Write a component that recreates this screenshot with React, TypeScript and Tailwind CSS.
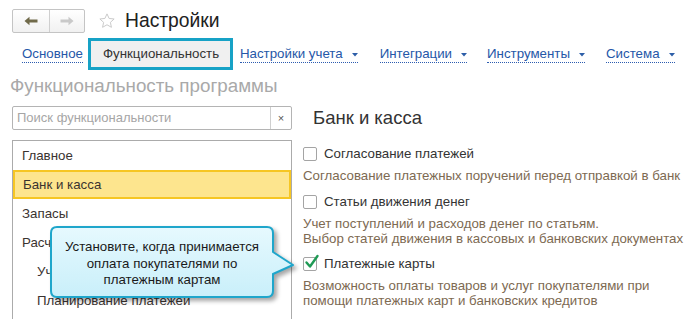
import React from "react";

function Caret() {
  return (
    <svg width="6" height="4" viewBox="0 0 6 4" className="ml-[9px] mt-[2px]">
      <path d="M0 0 L6 0 L3 3.5 Z" fill="#2d5ea8" />
    </svg>
  );
}

function Tab({ label, caret }: { label: string; caret?: boolean }) {
  return (
    <div className="flex items-center border-b border-dotted border-[#2c5cb0] leading-[16px] text-[13.3px] text-[#2557a8]">
      <span>{label}</span>
      {caret && <Caret />}
    </div>
  );
}

function Checkbox({ checked }: { checked?: boolean }) {
  return (
    <div className="relative w-[14px] h-[14px] border border-[#a4a4a4] rounded-[2px] bg-white shrink-0">
      {checked && (
        <svg width="16" height="16" viewBox="0 0 16 16" className="absolute left-[0px] top-[-4px]">
          <path d="M2.5 8.5 L6 12.5 L13.5 2" stroke="#1f9a55" strokeWidth="2.4" fill="none" strokeLinecap="round" strokeLinejoin="round" />
        </svg>
      )}
    </div>
  );
}

export default function App() {
  return (
    <div
      className="relative w-[700px] h-[319px] overflow-hidden bg-white text-[#333]"
      style={{ fontFamily: '"Liberation Sans", Arial, sans-serif' }}
    >
      {/* header */}
      <div className="flex items-center pt-[9px] pl-[12px]">
        <div className="flex h-[24px] w-[73px] border border-[#c4c4c4] rounded-[2px] bg-gradient-to-b from-white to-[#f1f1f1]">
          <div className="w-[37px] flex items-center justify-center border-r border-[#cfcfcf]">
            <svg width="14" height="10" viewBox="0 0 14 10">
              <path d="M0.5 5 L5.5 0.8 L5.5 3.6 L13.5 3.6 L13.5 6.4 L5.5 6.4 L5.5 9.2 Z" fill="#706a4a" />
            </svg>
          </div>
          <div className="flex-1 flex items-center justify-center">
            <svg width="14" height="10" viewBox="0 0 14 10">
              <path d="M13.5 5 L8.5 0.8 L8.5 3.6 L0.5 3.6 L0.5 6.4 L8.5 6.4 L8.5 9.2 Z" fill="#c9c9c9" />
            </svg>
          </div>
        </div>
        <svg width="18" height="18" viewBox="0 0 24 24" className="ml-[13px]">
          <path
            d="M12 2.5 L14.8 8.6 L21.5 9.3 L16.5 13.8 L17.9 20.4 L12 17 L6.1 20.4 L7.5 13.8 L2.5 9.3 L9.2 8.6 Z"
            fill="none"
            stroke="#c8c8c8"
            strokeWidth="1.3"
            strokeLinejoin="round"
          />
        </svg>
        <div className="ml-[9px] text-[19.3px] leading-[24px] text-[#222]">Настройки</div>
      </div>

      {/* tabs */}
      <div className="flex items-center h-[32px] mt-[5px] pl-[22px]">
        <Tab label="Основное" />
        <div className="ml-[5px] h-[32px] w-[145px] border-[3px] border-[#17a2c6] bg-[#f0f0f0] flex items-center pl-[12px] text-[13.3px] text-[#333]">
          Функциональность
        </div>
        <div className="ml-[7px]">
          <Tab label="Настройки учета" caret />
        </div>
        <div className="ml-[22px]">
          <Tab label="Интеграции" caret />
        </div>
        <div className="ml-[20px]">
          <Tab label="Инструменты" caret />
        </div>
        <div className="ml-[21px]">
          <Tab label="Система" caret />
        </div>
      </div>

      {/* section title */}
      <div className="mt-[5px] pl-[10px] text-[18.8px] leading-[22px] text-[#a9a9a9]">
        Функциональность программы
      </div>

      {/* columns */}
      <div className="flex mt-[9px] pl-[12px]">
        {/* left */}
        <div className="w-[280px] shrink-0">
          <div className="flex h-[24px] border border-[#b4b4b4] rounded-[2px]">
            <div className="flex-1 flex items-center pl-[4px] text-[13px] text-[#a6a6a6]">
              Поиск функциональности
            </div>
            <div className="w-[21px] flex items-center justify-center border-l border-[#cfcfcf] text-[11px] text-[#555]">
              ×
            </div>
          </div>
          <div className="mt-[10px] h-[200px] border border-[#ababab] text-[13.3px] text-[#3a3330]">
            <div className="h-[29px] flex items-center pl-[9px]">Главное</div>
            <div className="h-[29px] flex items-center pl-[8px] bg-[#fde58e] border-2 border-[#f6c623]">
              Банк и касса
            </div>
            <div className="h-[29px] flex items-center pl-[9px]">Запасы</div>
            <div className="h-[29px] flex items-center pl-[9px]">Расчеты</div>
            <div className="h-[29px] flex items-center pl-[24px]">Учет расчетов</div>
            <div className="h-[29px] flex items-center pl-[24px]">Планирование платежей</div>
          </div>
        </div>

        {/* right */}
        <div className="ml-[11px] flex-1">
          <div className="pl-[10px] h-[24px] text-[18.5px] leading-[24px] text-[#333]">Банк и касса</div>

          <div className="mt-[14px] h-[20px] flex items-center">
            <Checkbox />
            <span className="ml-[7px] text-[13.3px] text-[#333]">Согласование платежей</span>
          </div>
          <div className="mt-[4px] text-[13.3px] leading-[15px] text-[#7d6a52]">
            Согласование платежных поручений перед отправкой в банк
          </div>

          <div className="mt-[9px] h-[20px] flex items-center">
            <Checkbox />
            <span className="ml-[7px] text-[13.3px] text-[#333]">Статьи движения денег</span>
          </div>
          <div className="mt-[4px] text-[13.3px] leading-[15px] text-[#7d6a52]">
            <div>Учет поступлений и расходов денег по статьям.</div>
            <div>Выбор статей движения в кассовых и банковских документах</div>
          </div>

          <div className="mt-[8px] h-[20px] flex items-center">
            <Checkbox checked />
            <span className="ml-[7px] text-[13.3px] text-[#333]">Платежные карты</span>
          </div>
          <div className="mt-[4px] text-[13.3px] leading-[15px] text-[#7d6a52]">
            <div>Возможность оплаты товаров и услуг покупателями при</div>
            <div>помощи платежных карт и банковских кредитов</div>
          </div>
        </div>
      </div>

      {/* callout */}
      <div className="absolute left-[48px] top-[224px] w-[252px] h-[80px]">
        <svg width="252" height="80" viewBox="0 0 252 80" className="absolute left-0 top-0" style={{ filter: "drop-shadow(3px 3px 2px rgba(0,0,0,0.35))" }}>
          <defs>
            <linearGradient id="cg" x1="0" y1="0" x2="0" y2="1">
              <stop offset="0" stopColor="#e6f9fe" />
              <stop offset="1" stopColor="#c9effa" />
            </linearGradient>
          </defs>
          <path
            d="M9 3 H219 Q225 3 225 9 V28 L245 41 L225 50 V67 Q225 73 219 73 H9 Q3 73 3 67 V9 Q3 3 9 3 Z"
            fill="url(#cg)"
            stroke="#1fa6cb"
            strokeWidth="2"
            strokeLinejoin="round"
          />
        </svg>
        <div className="absolute left-[3px] top-[15px] w-[222px] text-center text-[13.3px] leading-[16.5px] text-[#1a1a1a]">
          <div>Установите, когда принимается</div>
          <div>оплата покупателями по</div>
          <div>платежным картам</div>
        </div>
      </div>
    </div>
  );
}
